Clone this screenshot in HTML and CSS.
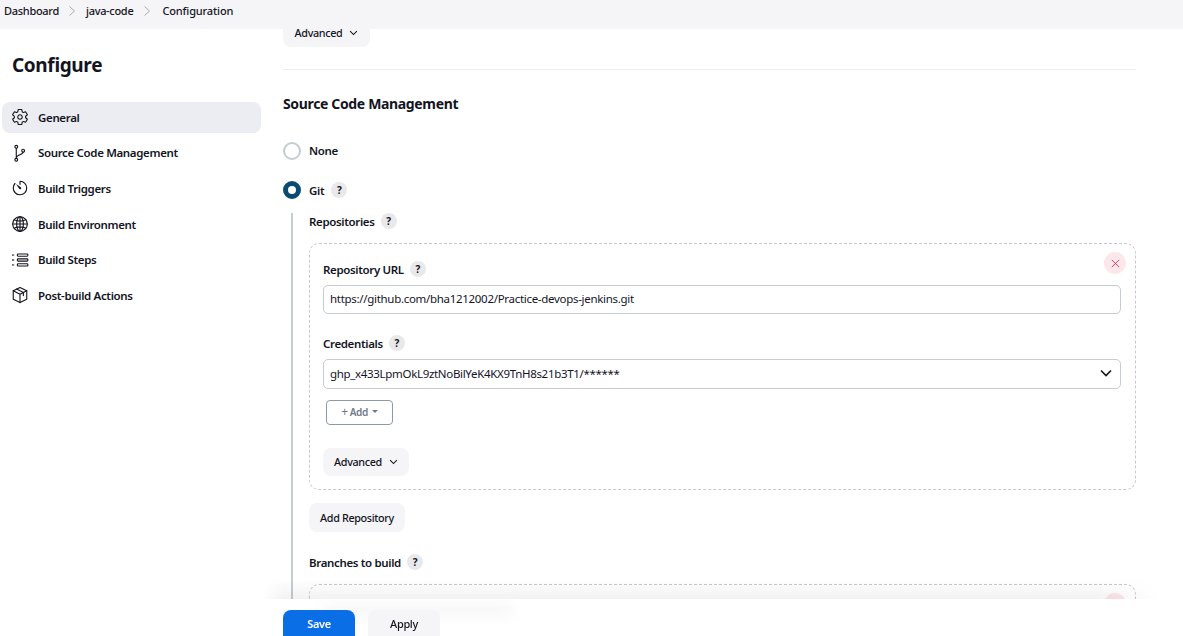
FILE: index.html
```html
<!DOCTYPE html>
<html lang="en">

<head>
    <meta charset="UTF-8">
    <title>java-code Config</title>
    <link rel="stylesheet" href="styles.css">
</head>

<body>
    <header class="breadcrumbs">
        <a>Dashboard</a>
        <svg class="crumb-sep" viewBox="0 0 8 12"><path d="M1.5 1.5L6.5 6l-5 4.5" /></svg>
        <a>java-code</a>
        <svg class="crumb-sep" viewBox="0 0 8 12"><path d="M1.5 1.5L6.5 6l-5 4.5" /></svg>
        <a class="crumb-last">Configuration</a>
    </header>

    <div class="page">
        <aside class="sidebar">
            <h1>Configure</h1>
            <nav class="side-nav">
                <a class="side-item active">
                    <svg viewBox="0 0 512 512"><path d="M262.29 192.31a64 64 0 1057.4 57.4 64.13 64.13 0 00-57.4-57.4zM416.39 256a154.34 154.34 0 01-1.53 20.79l45.21 35.46a10.81 10.81 0 012.45 13.75l-42.77 74a10.81 10.81 0 01-13.14 4.59l-44.9-18.08a16.11 16.11 0 00-15.17 1.75A164.48 164.48 0 01325 400.8a15.94 15.94 0 00-8.82 12.14l-6.73 47.89a11.08 11.08 0 01-10.68 9.17h-85.54a11.11 11.11 0 01-10.69-8.87l-6.72-47.82a16.07 16.07 0 00-9-12.22 155.3 155.3 0 01-21.46-12.57 16 16 0 00-15.11-1.71l-44.89 18.07a10.81 10.81 0 01-13.14-4.58l-42.77-74a10.8 10.8 0 012.45-13.75l38.21-30a16.05 16.05 0 006-14.08c-.36-4.17-.58-8.33-.58-12.5s.21-8.27.58-12.35a16 16 0 00-6.07-13.94l-38.19-30A10.81 10.81 0 0149.48 186l42.77-74a10.81 10.81 0 0113.14-4.59l44.9 18.08a16.11 16.11 0 0015.17-1.75A164.48 164.48 0 01187 111.2a15.94 15.94 0 008.82-12.14l6.73-47.89A11.08 11.08 0 01213.23 42h85.54a11.11 11.11 0 0110.69 8.87l6.72 47.82a16.07 16.07 0 009 12.22 155.3 155.3 0 0121.46 12.57 16 16 0 0015.11 1.71l44.89-18.07a10.81 10.81 0 0113.14 4.58l42.77 74a10.8 10.8 0 01-2.45 13.75l-38.21 30a16.05 16.05 0 00-6.05 14.08c.33 4.14.55 8.3.55 12.47z" /></svg>
                    General
                </a>
                <a class="side-item">
                    <svg viewBox="0 0 512 512"><circle cx="150" cy="80" r="40" /><circle cx="150" cy="448" r="40" /><circle cx="345" cy="190" r="40" /><path d="M150 120v288M345 230c0 90-195 60-195 170" /></svg>
                    Source Code Management
                </a>
                <a class="side-item">
                    <svg viewBox="0 0 512 512"><path d="M112.91 128A191.85 191.85 0 0064 254c-1.18 106.35 85.65 193.8 192 194 106.2.2 192-85.83 192-192 0-104.54-83.55-189.61-187.5-192a4.36 4.36 0 00-4.5 4.37V152" /><path class="solid" d="M233.38 278.63l-79-113a8.13 8.13 0 0111.32-11.32l113 79a32.5 32.5 0 01-37 53.34 33.21 33.21 0 01-8.32-8.02z" /></svg>
                    Build Triggers
                </a>
                <a class="side-item">
                    <svg viewBox="0 0 512 512"><circle cx="256" cy="256" r="208" /><ellipse cx="256" cy="256" rx="96" ry="208" /><path d="M256 48v416M48 256h416M88 136c100 44 236 44 336 0M88 376c100-44 236-44 336 0" /></svg>
                    Build Environment
                </a>
                <a class="side-item">
                    <svg viewBox="0 0 512 512"><rect x="180" y="84" width="300" height="64" rx="24" /><rect x="180" y="224" width="300" height="64" rx="24" /><rect x="180" y="364" width="300" height="64" rx="24" /><path class="solid" d="M36 90l72 26-72 26zM36 230l72 26-72 26zM36 370l72 26-72 26z" /></svg>
                    Build Steps
                </a>
                <a class="side-item">
                    <svg viewBox="0 0 512 512"><path d="M256 40l192 96v240L256 472 64 376V136z" /><path d="M64 136l192 96 192-96M256 232v240M160 88l192 96v88" /></svg>
                    Post-build Actions
                </a>
            </nav>
        </aside>

        <main class="content">
            <button class="btn btn-top">Advanced
                <svg class="chevron" viewBox="0 0 12 8"><path d="M1.5 1.5L6 6l4.5-4.5" /></svg>
            </button>
            <hr class="divider">

            <h2>Source Code Management</h2>

            <div class="radio-row first">
                <span class="radio"></span>
                <label>None</label>
            </div>
            <div class="radio-row second">
                <span class="radio checked"></span>
                <label>Git</label>
                <span class="help">?</span>
            </div>

            <section class="git-options">
                <div class="field-label">Repositories <span class="help">?</span></div>

                <div class="repeated-chunk">
                    <span class="delete-btn">
                        <svg viewBox="0 0 12 12"><path d="M2 2l8 8M10 2l-8 8" /></svg>
                    </span>
                    <div class="field-label">Repository URL <span class="help">?</span></div>
                    <input class="text-input" type="text" value="https://github.com/bha1212002/Practice-devops-jenkins.git">

                    <div class="field-label creds-label">Credentials <span class="help">?</span></div>
                    <div class="select-box">
                        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/******
                        <svg viewBox="0 0 12 8"><path d="M1 1.5L6 6.5l5-5" /></svg>
                    </div>

                    <button class="add-btn"><span class="plus">+</span> Add <span class="caret"></span></button>

                    <button class="btn btn-advanced">Advanced
                        <svg class="chevron" viewBox="0 0 12 8"><path d="M1.5 1.5L6 6l4.5-4.5" /></svg>
                    </button>
                </div>

                <button class="btn btn-add-repo">Add Repository</button>

                <div class="field-label branches-label">Branches to build <span class="help">?</span></div>

                <div class="repeated-chunk">
                    <span class="delete-btn">
                        <svg viewBox="0 0 12 12"><path d="M2 2l8 8M10 2l-8 8" /></svg>
                    </span>
                    <div class="hidden-label"></div>
                </div>
            </section>
        </main>
    </div>

    <footer class="bottom-bar">
        <button class="btn btn-save">Save</button>
        <button class="btn btn-apply">Apply</button>
    </footer>
</body>

</html>
```

FILE: styles.css
```css
* {
    box-sizing: border-box;
}

html,
body {
    margin: 0;
    height: 636px;
    overflow: hidden;
}

body {
    font-family: "Noto Sans", sans-serif;
    font-size: 11.5px;
    letter-spacing: -0.35px;
    color: #14141f;
    background-color: white;
}

.breadcrumbs {
    position: relative;
    z-index: 2;
    display: flex;
    align-items: center;
    height: 29px;
    padding: 0 4px 8px;
    background-color: #f5f5f7;
    font-size: 11px;
    letter-spacing: -0.3px;
    font-weight: 500;
}

.crumb-last {
    margin-left: 2px;
    letter-spacing: -0.15px;
}

.crumb-sep {
    width: 8px;
    height: 12px;
    margin: 0 9.5px;
    fill: none;
    stroke: #a9a9b2;
    stroke-width: 1;
}

.page {
    display: flex;
}

.sidebar {
    flex: 0 0 283px;
    padding: 0 22px 0 2px;
}

.sidebar h1 {
    margin: 23px 0 22.8px 10px;
    font-size: 19px;
    line-height: 27px;
    font-weight: 700;
}

.side-nav {
    display: flex;
    flex-direction: column;
    gap: 4.6px;
}

.side-item {
    display: flex;
    align-items: center;
    gap: 9px;
    height: 31px;
    padding-left: 9px;
    border-radius: 8px;
    font-weight: 600;
}

.side-item.active {
    background-color: #ecedf2;
}

.side-item svg {
    width: 18px;
    height: 18px;
    fill: none;
    stroke: #14141f;
    stroke-width: 32;
    stroke-linecap: round;
    stroke-linejoin: round;
}

.side-item svg .solid {
    fill: #14141f;
    stroke: none;
}

.content {
    flex: 0 0 852px;
}

.btn {
    display: inline-flex;
    align-items: center;
    justify-content: center;
    padding: 0 0 1px;
    border: none;
    border-radius: 8px;
    background-color: #f5f5f7;
    color: #14141f;
    font-family: inherit;
    font-size: 10.8px;
    letter-spacing: inherit;
    font-weight: 500;
}

.chevron {
    width: 9px;
    height: 6px;
    margin-left: 7px;
    fill: none;
    stroke: #14141f;
    stroke-width: 1.4;
}

.btn-top {
    display: flex;
    width: 87px;
    height: 28px;
    margin-top: -10px;
}

.divider {
    height: 1px;
    margin: 22px 0 0;
    border: none;
    background-color: #eeeef0;
}

.content h2 {
    margin: 24px 0 0;
    font-size: 14px;
    line-height: 20px;
    font-weight: 700;
}

.radio-row {
    display: flex;
    align-items: center;
    gap: 8px;
    height: 18px;
    font-weight: 600;
}

.radio-row.first {
    margin-top: 28px;
}

.radio-row.first label {
    margin-bottom: 2px;
}

.radio-row.second {
    margin-top: 21px;
}

.radio-row .help {
    margin-left: -1px;
}

.radio {
    width: 18px;
    height: 18px;
    border: 2px solid #c5ccd3;
    border-radius: 50%;
}

.radio.checked {
    border: 5.5px solid #0b4a72;
}

.help {
    display: inline-flex;
    align-items: center;
    justify-content: center;
    width: 16px;
    height: 16px;
    margin-left: 2px;
    border-radius: 50%;
    background-color: #e9e9ec;
    font-size: 10px;
    font-weight: 700;
}

.git-options {
    height: 500px;
    margin: 14px 0 0 8px;
    padding-left: 16px;
    border-left: 2px solid #c5ccd3;
}

.field-label {
    display: flex;
    align-items: center;
    gap: 4px;
    height: 16px;
    font-weight: 600;
}

.repeated-chunk {
    position: relative;
    height: 247px;
    margin-top: 14px;
    padding: 17px 14px 0 13px;
    border: 1px dashed #c8c8cc;
    border-radius: 10px;
}

.delete-btn {
    position: absolute;
    top: 8px;
    right: 9px;
    display: flex;
    align-items: center;
    justify-content: center;
    width: 22px;
    height: 22px;
    border-radius: 50%;
    background-color: #fce8ea;
}

.delete-btn svg {
    width: 11px;
    height: 11px;
    fill: none;
    stroke: #e6234f;
    stroke-width: 0.9;
}

.text-input {
    display: block;
    width: 798px;
    height: 29px;
    margin-top: 8px;
    padding: 0 6px 2px;
    border: 1px solid #c5ccd3;
    border-radius: 5px;
    color: #14141f;
    font-family: inherit;
    font-size: 11.5px;
    letter-spacing: -0.3px;
}

.creds-label {
    margin-top: 21px;
}

.select-box {
    display: flex;
    align-items: center;
    justify-content: space-between;
    width: 798px;
    height: 30px;
    margin-top: 8px;
    padding: 0 8px 2px 6px;
    border: 1px solid #c5ccd3;
    border-radius: 5px;
    letter-spacing: -0.32px;
}

.select-box svg {
    width: 12px;
    height: 8px;
    fill: none;
    stroke: #14141f;
    stroke-width: 1.6;
}

.add-btn {
    display: flex;
    align-items: center;
    justify-content: center;
    gap: 2px;
    width: 67px;
    height: 25px;
    margin: 11px 0 0 3px;
    padding: 0 0 2px;
    border: 1px solid #8e99a6;
    border-radius: 4px;
    background-color: white;
    color: #6f7a8a;
    font-family: inherit;
    font-size: 10px;
    letter-spacing: inherit;
    font-weight: 600;
}

.plus {
    font-size: 12px;
    font-weight: 400;
}

.caret {
    width: 0;
    height: 0;
    margin-left: 2px;
    border-top: 3px solid #6f7a8a;
    border-left: 3px solid transparent;
    border-right: 3px solid transparent;
}

.btn-advanced {
    display: flex;
    width: 86px;
    height: 28px;
    margin-top: 23px;
}

.btn-add-repo {
    display: flex;
    width: 96px;
    height: 29px;
    margin-top: 13px;
}

.branches-label {
    margin-top: 22px;
}

/* shows through the footer blur only */
.hidden-label {
    width: 190px;
    height: 9px;
    margin-top: 4px;
    background-color: #14141f;
}

.bottom-bar {
    position: fixed;
    left: 283px;
    top: 599px;
    display: flex;
    gap: 13px;
    width: 855px;
    height: 37px;
    padding-top: 11px;
    background-color: rgba(255, 255, 255, 0.95);
    backdrop-filter: blur(8px);
}

.bottom-bar::before {
    content: "";
    position: absolute;
    left: -20px;
    right: -20px;
    top: -20px;
    height: 20px;
    background: linear-gradient(rgba(0, 0, 0, 0), rgba(0, 0, 0, 0.05));
    -webkit-mask-image: linear-gradient(90deg, transparent, black 20px, black 835px, transparent);
    mask-image: linear-gradient(90deg, transparent, black 20px, black 835px, transparent);
}

.btn-save,
.btn-apply {
    width: 72px;
    height: 38px;
    padding-bottom: 12px;
    font-size: 11px;
}

.btn-save {
    background-color: #0a6ee6;
    color: white;
    font-weight: 600;
}
```
